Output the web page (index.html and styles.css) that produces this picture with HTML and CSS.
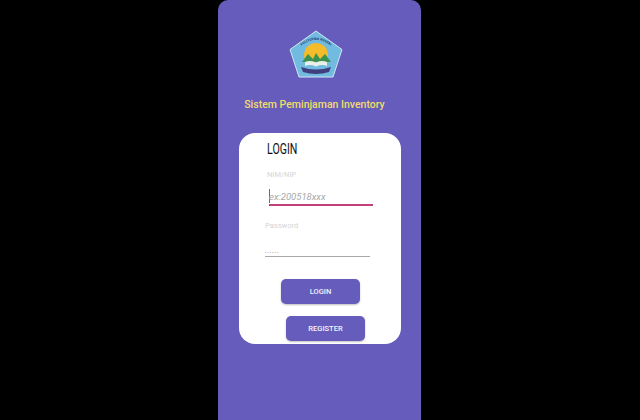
FILE: index.html
```html
<!DOCTYPE html>
<html>

<head>
    <title>Login</title>
    <meta charset="utf-8" />
    <link rel="stylesheet" href="styles.css">
</head>

<body>
    <div class="phone">
        <svg class="logo" width="54" height="48" viewBox="0 0 54 48">
            <defs>
                <path id="logoArc" d="M8 25 A19.500 19.500 0 0 1 46 25" />
                <clipPath id="sunClip">
                    <rect x="0" y="0" width="54" height="31" />
                </clipPath>
            </defs>
            <polygon points="27,1 53,19.500 44,47 10,47 1,19.500" fill="#72bbe0" stroke="#cfe6f2" stroke-width="1" />
            <text class="logo-text" font-size="3.400" fill="#24406a">
                <textPath href="#logoArc" startOffset="50%" text-anchor="middle">POLITEKNIK NEGERI</textPath>
            </text>
            <circle cx="27" cy="25" r="12" fill="#f4bb2a" clip-path="url(#sunClip)" />
            <path d="M13 32 L19 24 L24 29 L27 23 L31 29 L36 24 L42 32 Z" fill="#3a9150" />
            <path d="M16 32 Q21 30 27 32.500 Q33 30 38 32 L38 36 Q33 34 27 36.500 Q21 34 16 36 Z" fill="#e9eee6" />
            <path d="M12 37 Q27 42 42 37 L40 42 Q27 46 14 42 Z" fill="#3f3f7e" />
        </svg>
        <div class="app-title">Sistem Peminjaman Inventory</div>

        <div class="card">
            <h1 class="card-title">LOGIN</h1>
            <div class="field field-nim">
                <label class="field-label">NIM/NIP</label>
                <div class="field-input is-focused"><span class="cursor"></span><span class="hint">ex:200518xxx</span></div>
            </div>
            <div class="field field-pass">
                <label class="field-label">Password</label>
                <div class="field-input"><span class="dots">••••••</span></div>
            </div>
            <button class="btn btn-login">LOGIN</button>
            <button class="btn btn-register">REGISTER</button>
        </div>
    </div>
</body>

</html>
```

FILE: styles.css
```css
body {
    margin: 0;
    height: 420px;
    overflow: hidden;
    background-color: #000;
    font-family: Roboto, "Liberation Sans", sans-serif;
}

.phone {
    width: 203px;
    height: 420px;
    margin-left: 218px;
    box-sizing: border-box;
    padding-top: 30px;
    background-color: #655cbb;
    border-radius: 10px 10px 0 0;
    display: flex;
    flex-direction: column;
    align-items: center;
}

.logo {
    display: block;
    margin-right: 8px;
}

.logo-text {
    font-family: Roboto, sans-serif;
    font-weight: 700;
}

.app-title {
    margin-top: 20px;
    margin-right: 10px;
    font-size: 10.500px;
    line-height: 14px;
    font-weight: 500;
    color: #f1dc6b;
}

.card {
    width: 162px;
    height: 211px;
    margin-top: 21px;
    margin-left: 1px;
    box-sizing: border-box;
    background-color: #fff;
    border-radius: 16px;
    padding-top: 9px;
    overflow: hidden;
}

.card-title {
    margin: 0 0 0 28px;
    font-size: 14px;
    line-height: 15px;
    font-weight: 400;
    color: #111;
    transform: scaleX(0.76);
    transform-origin: left center;
}

.field-label {
    display: block;
    font-size: 7.500px;
    line-height: 10px;
    color: #d4d4d4;
}

.field-nim {
    margin: 13px 0 0 28px;
}

.field-pass {
    margin: 15px 0 0 26px;
}

.field-input {
    width: 105px;
    display: flex;
    align-items: center;
    border-bottom: 1px solid #a9a9a9;
}

.field-nim .field-input {
    width: 104px;
    height: 17px;
    margin-top: 7px;
    margin-left: 2px;
    border-bottom: 2px solid #c2417c;
}

.field-pass .field-input {
    height: 17px;
    margin-top: 8px;
    align-items: flex-end;
}

.cursor {
    width: 1px;
    height: 14px;
    background-color: #c2417c;
}

.hint {
    margin-left: -1px;
    padding-top: 2px;
    font-size: 9.500px;
    font-style: italic;
    color: #a8a8a8;
}

.dots {
    font-size: 4px;
    line-height: 7px;
    letter-spacing: 1px;
    color: #777;
}

.btn {
    display: block;
    width: 79px;
    height: 25px;
    padding: 0;
    border: 0;
    border-radius: 5px;
    background-color: #655cbb;
    box-shadow: 0 1px 2px rgba(0, 0, 0, 0.25);
    color: #f4f3fb;
    font-family: Roboto, sans-serif;
    font-size: 7.500px;
    font-weight: 500;
}

.btn-login {
    margin: 22px 0 0 42px;
}

.btn-register {
    margin: 12px 0 0 47px;
}
```
